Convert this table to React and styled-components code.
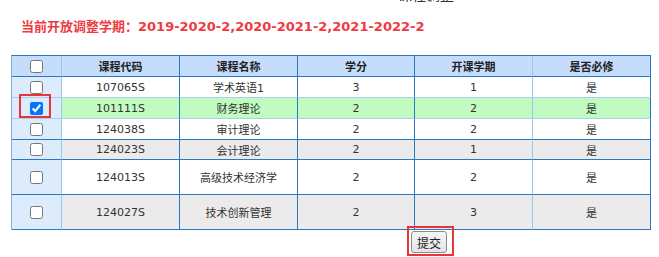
import React from "react";
import styled, { createGlobalStyle } from "styled-components";

const GlobalStyle = createGlobalStyle`
  html, body {
    margin: 0;
    padding: 0;
    background: #ffffff;
  }
  body {
    font-family: "DejaVu Sans", "Noto Sans CJK SC", sans-serif;
  }
`;

const Page = styled.div`
  width: 659px;
  height: 257px;
  overflow: hidden;
  position: relative;
`;

// the page heading is scrolled off, only its lowest pixels show
const ClippedHeading = styled.div`
  height: 3px;
  overflow: hidden;
  padding-left: 398px;
  span {
    display: block;
    margin-top: -13px;
    font-size: 14px;
    line-height: 15px;
    color: #333;
    font-family: "Noto Sans CJK SC", sans-serif;
  }
`;

const Term = styled.div`
  margin: 15px 0 0 21px;
  font-size: 13px;
  line-height: 17px;
  font-weight: bold;
  color: #ef3a42;
  font-family: "DejaVu Sans", "Noto Sans CJK SC", sans-serif;
`;

const Grid = styled.table`
  margin: 20px 0 0 11px;
  border-collapse: separate;
  border-spacing: 0;
  table-layout: fixed;
  width: 639px;
  border-top: 1px solid #2a78c0;
  border-left: 1px solid #7fb2e2;
  font-size: 11px;
  color: #333;
`;

const HeadCell = styled.th`
  box-sizing: border-box;
  width: ${(p) => p.$w}px;
  height: 21px;
  padding: 0;
  background: #c5dcfb;
  font-weight: bold;
  color: #222;
  text-align: center;
  border-right: 1px solid ${(p) => (p.$soft ? "#9cc7eb" : "#2a78c0")};
  border-bottom: 1px solid #2a78c0;
`;

const Cell = styled.td`
  box-sizing: border-box;
  padding: 0;
  text-align: center;
  background: ${(p) => p.$bg};
  border-right: 1px solid ${(p) => (p.$soft ? "#9cc7eb" : "#2a78c0")};
  border-bottom: 1px solid ${(p) => (p.$softBottom ? "#a9cfe9" : "#2a78c0")};
`;

const PickCell = styled(Cell)`
  position: relative;
  background: #ddecfd;
`;

const Row = styled.tr`
  height: ${(p) => p.$h}px;
`;

const Check = styled.input.attrs({ type: "checkbox" })`
  width: 13px;
  height: 13px;
  margin: 0;
  vertical-align: middle;
`;

const Mark = styled.span`
  position: absolute;
  box-sizing: border-box;
  border: 2px solid #e8353c;
  pointer-events: none;
  left: ${(p) => p.$l}px;
  top: ${(p) => p.$t}px;
  width: ${(p) => p.$w}px;
  height: ${(p) => p.$h}px;
`;

const Actions = styled.div`
  padding: 1px 0 0 411px;
`;

const SubmitWrap = styled.span`
  position: relative;
  display: inline-block;
`;

const SubmitButton = styled.button`
  box-sizing: border-box;
  width: 36px;
  height: 22px;
  padding: 0;
  font-size: 12px;
  font-family: "Noto Sans CJK SC", sans-serif;
  color: #222;
  background: linear-gradient(#f6f6f6, #e4e4e4);
  border: 1px solid #8c8c8c;
  border-radius: 3px;
  display: block;
`;

const columns = [
  { label: "", w: 50, soft: true },
  { label: "课程代码", w: 118 },
  { label: "课程名称", w: 118 },
  { label: "学分", w: 117 },
  { label: "开课学期", w: 118, soft: true },
  { label: "是否必修", w: 118 },
];

const courses = [
  { code: "107065S", name: "学术英语1", credit: 3, term: 1, bg: "#ffffff", h: 21, softBottom: true },
  { code: "101111S", name: "财务理论", credit: 2, term: 2, bg: "#c1fbc1", h: 21, checked: true, softBottom: true },
  { code: "124038S", name: "审计理论", credit: 2, term: 2, bg: "#ffffff", h: 21 },
  { code: "124023S", name: "会计理论", credit: 2, term: 1, bg: "#ebebeb", h: 20 },
  { code: "124013S", name: "高级技术经济学", credit: 2, term: 2, bg: "#ffffff", h: 35 },
  { code: "124027S", name: "技术创新管理", credit: 2, term: 3, bg: "#ebebeb", h: 35 },
];

export default function App() {
  return (
    <Page>
      <GlobalStyle />
      <ClippedHeading>
        <span>课程调整</span>
      </ClippedHeading>
      <Term>当前开放调整学期：2019-2020-2,2020-2021-2,2021-2022-2</Term>

      <Grid>
        <thead>
          <Row $h={21}>
            {columns.map((c, i) => (
              <HeadCell key={i} $w={c.w} $soft={c.soft}>
                {i === 0 ? <Check readOnly /> : c.label}
              </HeadCell>
            ))}
          </Row>
        </thead>
        <tbody>
          {courses.map((c) => (
            <Row key={c.code} $h={c.h}>
              <PickCell $soft $softBottom={c.softBottom}>
                <Check defaultChecked={!!c.checked} />
                {c.checked ? <Mark $l={7} $t={-4} $w={32} $h={24} /> : null}
              </PickCell>
              <Cell $bg={c.bg} $softBottom={c.softBottom}>{c.code}</Cell>
              <Cell $bg={c.bg} $softBottom={c.softBottom}>{c.name}</Cell>
              <Cell $bg={c.bg} $softBottom={c.softBottom}>{c.credit}</Cell>
              <Cell $bg={c.bg} $softBottom={c.softBottom} $soft>{c.term}</Cell>
              <Cell $bg={c.bg} $softBottom={c.softBottom}>是</Cell>
            </Row>
          ))}
        </tbody>
      </Grid>

      <Actions>
        <SubmitWrap>
          <SubmitButton type="button">提交</SubmitButton>
          <Mark $l={-4} $t={-5} $w={47} $h={30} />
        </SubmitWrap>
      </Actions>
    </Page>
  );
}
